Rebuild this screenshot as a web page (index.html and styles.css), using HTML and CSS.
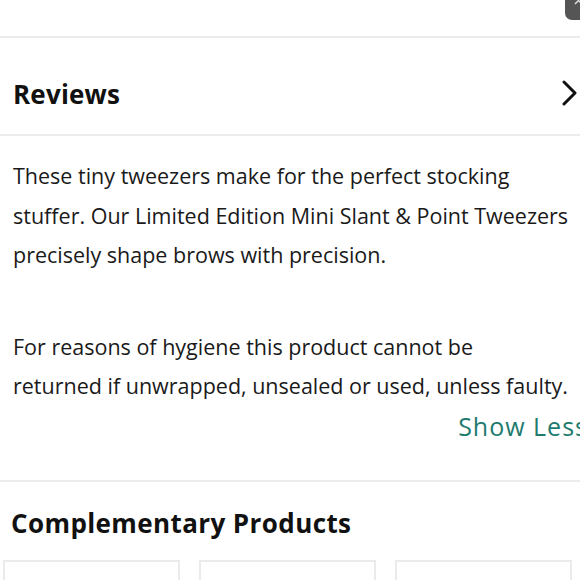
FILE: index.html
```html
<!DOCTYPE html>
<html lang="en">
<head>
<meta charset="utf-8">
<link rel="stylesheet" href="styles.css">
</head>
<body>
<div class="page">
  <div class="top">
    <div class="badge">
      <svg width="15" height="20" viewBox="0 0 15 20"><path d="M10 -3 L17 4 M17 -3 L10 4" stroke="#ddd" stroke-width="1.5" fill="none"/></svg>
    </div>
  </div>
  <div class="rule"></div>
  <div class="section-head">
    <h2 class="title">Reviews</h2>
    <svg class="chev" width="18" height="26" viewBox="0 0 18 26"><path d="M3 2 L14 13 L3 24" stroke="#111" stroke-width="3" fill="none" stroke-linecap="round" stroke-linejoin="round"/></svg>
  </div>
  <div class="rule"></div>
  <div class="desc">
    <p class="para">These tiny tweezers make for the perfect stocking<br>stuffer. Our Limited Edition Mini Slant &amp; Point Tweezers<br>precisely shape brows with precision.</p>
    <p class="para second">For reasons of hygiene this product cannot be<br>returned if unwrapped, unsealed or used, unless faulty.</p>
    <div class="toggle-row"><span class="toggle">Show Less</span></div>
  </div>
  <div class="rule"></div>
  <h2 class="title comp">Complementary Products</h2>
  <div class="cards">
    <div class="card"></div>
    <div class="card"></div>
    <div class="card"></div>
  </div>
</div>
</body>
</html>
```
FILE: styles.css
```css
html, body {
  margin: 0;
  padding: 0;
  background: #fff;
  overflow: hidden;
}
.page {
  width: 588px;
  height: 580px;
  overflow: hidden;
  font-family: "Open Sans", "Liberation Sans", sans-serif;
  color: #111;
}
.top {
  height: 36px;
  position: relative;
}
.badge {
  position: absolute;
  left: 565px;
  top: 0;
  width: 23px;
  height: 20px;
  background: #555;
  border-bottom-left-radius: 7px;
}
.badge svg { display: block; }
.rule {
  height: 2px;
  background: #ececec;
}
.section-head {
  height: 96px;
  box-sizing: border-box;
  display: flex;
  align-items: center;
  justify-content: space-between;
  padding: 16px 0 0 13px;
  width: 579px;
}
.title {
  margin: 0;
  font-size: 26px;
  font-weight: 700;
  letter-spacing: 0.2px;
  color: #111;
}
.chev {
  display: block;
  margin-top: -2px;
}
.desc {
  padding: 20px 0 0 13px;
  height: 344px;
  box-sizing: border-box;
}
.para {
  margin: 0;
  font-size: 21.5px;
  line-height: 39.5px;
  color: #1a1a1a;
}
.second {
  margin-top: 52px;
}
.toggle-row {
  display: flex;
  justify-content: flex-end;
}
.toggle {
  font-size: 25px;
  line-height: 40px;
  color: #1e7b6e;
  letter-spacing: 1px;
}
.comp {
  margin: 24px 0 0 11px;
  height: 34px;
  line-height: 34px;
  letter-spacing: 0.4px;
}
.cards {
  display: flex;
  gap: 19px;
  padding: 20px 0 0 3px;
}
.card {
  width: 173px;
  height: 60px;
  border: 2px solid #ebebeb;
  border-bottom: none;
  flex: none;
}
```
